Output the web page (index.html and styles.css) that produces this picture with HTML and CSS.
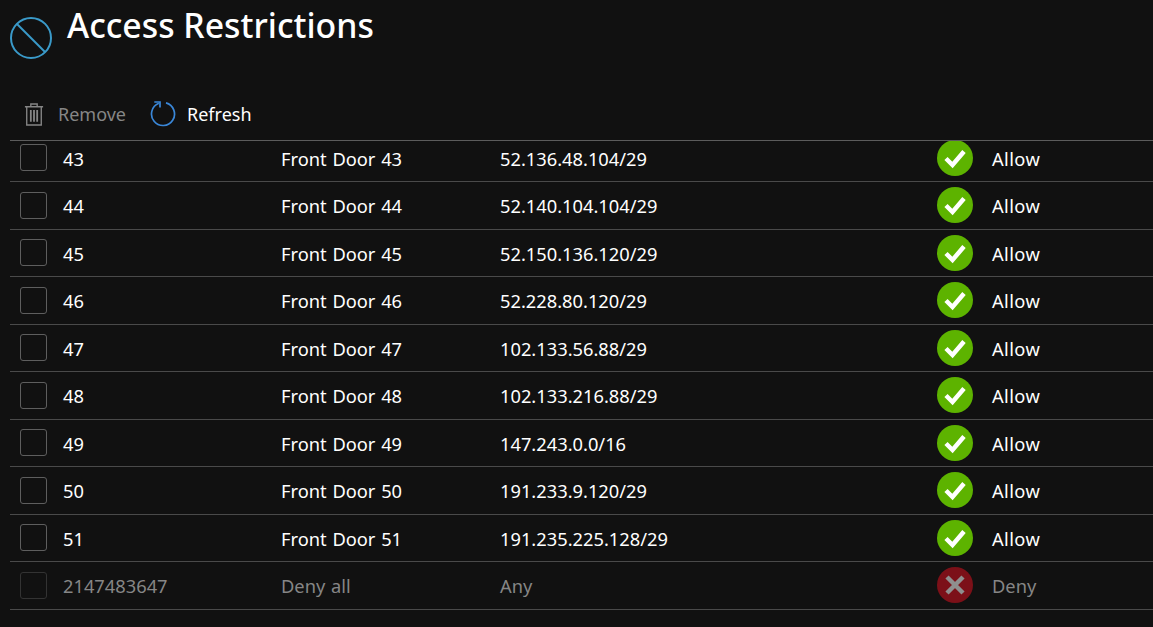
FILE: index.html
```html
<!DOCTYPE html>
<html lang="en">
<head>
<meta charset="utf-8">
<title>Access Restrictions</title>
<link rel="stylesheet" href="styles.css">
</head>
<body>
<div class="page">
  <header class="header">
    <svg class="header-icon" viewBox="0 0 42 42"><circle cx="21" cy="21" r="20" fill="none" stroke="#3a9ac9" stroke-width="2"/><path d="M7 7 L35 35" stroke="#3a9ac9" stroke-width="2"/></svg>
    <h1 class="title">Access Restrictions</h1>
  </header>
  <div class="toolbar">
    <button class="tool tool-off">
      <svg class="tool-icon" viewBox="0 0 22 26"><path d="M1 4.500H21M7.500 4.500V1.500H14.500V4.500M3 4.500V24.500H19V4.500" fill="none" stroke="#858585" stroke-width="1.500"/><path d="M7.500 8V21M11 8V21M14.500 8V21" fill="none" stroke="#858585" stroke-width="2"/></svg>
      <span>Remove</span>
    </button>
    <button class="tool tool-refresh">
      <svg class="refresh-icon" viewBox="0 0 26 26"><path d="M16 1.900A11.500 11.500 0 1 1 8.800 2.300" fill="none" stroke="#3a87d8" stroke-width="1.700"/><path d="M4.300 1H10V6.500" fill="none" stroke="#3a87d8" stroke-width="1.700"/></svg>
      <span>Refresh</span>
    </button>
  </div>
  <div class="list">
    <div class="rows">
      <div class="row"><span class="box"></span><span class="c-num">43</span><span class="c-name">Front Door 43</span><span class="c-ip">52.136.48.104/29</span><svg class="status"><use href="#ok"/></svg><span class="c-act">Allow</span></div>
      <div class="row"><span class="box"></span><span class="c-num">44</span><span class="c-name">Front Door 44</span><span class="c-ip">52.140.104.104/29</span><svg class="status"><use href="#ok"/></svg><span class="c-act">Allow</span></div>
      <div class="row"><span class="box"></span><span class="c-num">45</span><span class="c-name">Front Door 45</span><span class="c-ip">52.150.136.120/29</span><svg class="status"><use href="#ok"/></svg><span class="c-act">Allow</span></div>
      <div class="row"><span class="box"></span><span class="c-num">46</span><span class="c-name">Front Door 46</span><span class="c-ip">52.228.80.120/29</span><svg class="status"><use href="#ok"/></svg><span class="c-act">Allow</span></div>
      <div class="row"><span class="box"></span><span class="c-num">47</span><span class="c-name">Front Door 47</span><span class="c-ip">102.133.56.88/29</span><svg class="status"><use href="#ok"/></svg><span class="c-act">Allow</span></div>
      <div class="row"><span class="box"></span><span class="c-num">48</span><span class="c-name">Front Door 48</span><span class="c-ip">102.133.216.88/29</span><svg class="status"><use href="#ok"/></svg><span class="c-act">Allow</span></div>
      <div class="row"><span class="box"></span><span class="c-num">49</span><span class="c-name">Front Door 49</span><span class="c-ip">147.243.0.0/16</span><svg class="status"><use href="#ok"/></svg><span class="c-act">Allow</span></div>
      <div class="row"><span class="box"></span><span class="c-num">50</span><span class="c-name">Front Door 50</span><span class="c-ip">191.233.9.120/29</span><svg class="status"><use href="#ok"/></svg><span class="c-act">Allow</span></div>
      <div class="row"><span class="box"></span><span class="c-num">51</span><span class="c-name">Front Door 51</span><span class="c-ip">191.235.225.128/29</span><svg class="status"><use href="#ok"/></svg><span class="c-act">Allow</span></div>
      <div class="row row-off"><span class="box"></span><span class="c-num">2147483647</span><span class="c-name">Deny all</span><span class="c-ip">Any</span><svg class="status"><use href="#no"/></svg><span class="c-act">Deny</span></div>
    </div>
  </div>
</div>
<svg class="defs" width="0" height="0">
  <symbol id="ok" viewBox="0 0 36 36"><circle cx="18" cy="18" r="18" fill="#5db300"/><path d="M9 18.500L15.500 25L27 11.500" fill="none" stroke="#fff" stroke-width="4.500"/></symbol>
  <symbol id="no" viewBox="0 0 36 36"><circle cx="18" cy="18" r="18" fill="#7c1018"/><path d="M10 10L26 26M26 10L10 26" fill="none" stroke="#8f8f8f" stroke-width="4.500"/></symbol>
</svg>
</body>
</html>
```
FILE: styles.css
```css
html, body {
  margin: 0;
  height: 100%;
  background: #111111;
  overflow: hidden;
}
.page {
  height: 627px;
  padding-left: 10px;
  color: #ffffff;
  font-family: "Noto Sans", "Open Sans", sans-serif;
  font-size: 18.3px;
  overflow: hidden;
}
.header {
  display: flex;
  align-items: flex-start;
  height: 88px;
  gap: 15px;
}
.header-icon {
  width: 42px;
  height: 42px;
  margin-top: 17px;
  flex: none;
}
.title {
  margin: 3px 0 0;
  font-size: 33.8px;
  line-height: 44px;
  font-weight: 500;
  color: #ffffff;
}
.toolbar {
  display: flex;
  align-items: center;
  height: 52px;
  gap: 24px;
  padding-left: 14px;
}
.tool {
  display: flex;
  align-items: center;
  gap: 14px;
  padding: 0;
  border: 0;
  background: none;
  color: #ffffff;
  font-family: inherit;
  font-size: 18px;
}
.tool-off {
  color: #868686;
}
.tool-refresh {
  gap: 11px;
}
.tool-icon {
  width: 20px;
  height: 25px;
  flex: none;
}
.refresh-icon {
  width: 26px;
  height: 26px;
  flex: none;
}
.list {
  height: 475px;
  overflow: hidden;
  border-top: 1px solid #5c5c5c;
}
.rows {
  margin-top: -6.5px;
}
.row {
  display: flex;
  align-items: center;
  box-sizing: border-box;
  height: 47.5px;
  border-bottom: 1px solid #4a4a4a;
  white-space: nowrap;
}
.box {
  flex: none;
  box-sizing: border-box;
  width: 27px;
  height: 27px;
  margin-left: 10px;
  border: 1px solid #5e5e5e;
  border-radius: 3px;
}
.c-num,
.c-name,
.c-ip,
.c-act {
  padding-top: 1px;
}
.c-num {
  width: 218px;
  margin-left: 16px;
}
.c-name {
  width: 219px;
  word-spacing: 1px;
}
.c-ip {
  width: 437px;
}
.status {
  flex: none;
  width: 36px;
  height: 36px;
}
.c-act {
  margin-left: 19px;
  letter-spacing: 0.4px;
}
.row-off {
  color: #868686;
}
.row-off .c-act {
  letter-spacing: 0;
}
.row-off .box {
  border-color: #333333;
}
.defs {
  position: absolute;
}
```
